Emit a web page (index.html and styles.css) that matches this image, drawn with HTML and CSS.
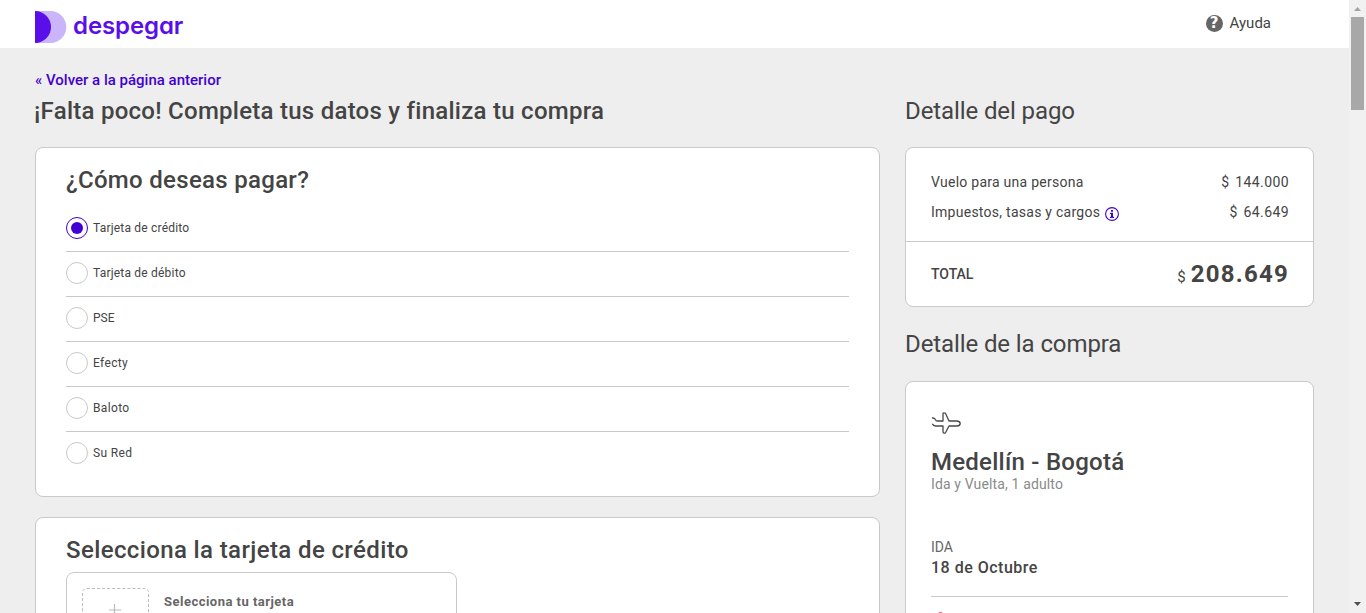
FILE: index.html
```html
<!DOCTYPE html>
<html lang="es">
<head>
<meta charset="utf-8">
<title>Despegar</title>
<link rel="stylesheet" href="styles.css">
</head>
<body>
<div class="page">
  <header class="header">
    <div class="logo">
      <svg class="logo-mark" width="32" height="32" viewBox="0 0 32 32"><path d="M0 0H15.500A15.800 16 0 0 1 15.500 32H0Z" fill="#cab5fa"/><path d="M0 0A16 16 0 0 1 0 32Z" fill="#5a0eea"/></svg>
      <span class="logo-name">despegar</span>
    </div>
    <div class="help"><span class="help-icon">?</span><span class="help-text">Ayuda</span></div>
  </header>
  <main class="content">
    <section class="main-column">
      <a class="back">« Volver a la página anterior</a>
      <h1 class="title">¡Falta poco! Completa tus datos y finaliza tu compra</h1>
      <div class="card payment">
        <h2 class="card-title pay-title">¿Cómo deseas pagar?</h2>
        <ul class="options">
          <li class="option"><span class="radio checked"></span><span>Tarjeta de crédito</span></li>
          <li class="option"><span class="radio"></span><span>Tarjeta de débito</span></li>
          <li class="option"><span class="radio"></span><span class="acronym">PSE</span></li>
          <li class="option"><span class="radio"></span><span class="brand">Efecty</span></li>
          <li class="option"><span class="radio"></span><span class="brand">Baloto</span></li>
          <li class="option"><span class="radio"></span><span class="brand">Su Red</span></li>
        </ul>
      </div>
      <div class="card select-card">
        <h2 class="card-title select-title">Selecciona la tarjeta de crédito</h2>
        <div class="picker">
          <div class="slot"><svg width="12" height="12" viewBox="0 0 12 12"><path d="M5.500 0V12M0 6H12" stroke="#bbb" stroke-width="1.200"/></svg></div>
          <span class="picker-label">Selecciona tu tarjeta</span>
        </div>
      </div>
    </section>
    <aside class="side-column">
      <h2 class="side-title">Detalle del pago</h2>
      <div class="card totals">
        <div class="lines">
          <div class="line"><span>Vuelo para una persona</span><span class="price">$ 144.000</span></div>
          <div class="line"><span class="concept"><span>Impuestos, tasas y cargos</span>
            <svg class="info" width="14" height="14" viewBox="0 0 14 14"><circle cx="7" cy="7" r="6.400" fill="none" stroke="#4300d2" stroke-width="1.100"/><path d="M6 3h2v1.700H6zM5 5.700h3v4.100h1V11H5V9.800h1V6.900H5z" fill="#4300d2"/></svg></span><span class="price">$ 64.649</span></div>
        </div>
        <div class="total"><span class="total-label">TOTAL</span><span class="total-price"><span class="currency">$</span><span class="amount">208.649</span></span></div>
      </div>
      <h2 class="side-title buy-detail">Detalle de la compra</h2>
      <div class="card trip">
        <svg class="plane" width="30" height="22" viewBox="0 0 30 22" fill="none" stroke="#484848" stroke-width="1.300" stroke-linejoin="round" stroke-linecap="round"><path d="M1.500 6Q3.500 5.800 4.500 7.700Q5 9 6.500 9H12V2Q12 .7 13.300.8Q14.300.8 14.700 1.800L18 9H26Q29.200 9.500 29.200 11.600Q29 14 26 14H18L14.700 20.300Q14.100 21.300 13.200 21.200Q12 21 12 19.800V14H4.500Q2.500 13.700 1.500 12.200"/></svg>
        <h3 class="route">Medellín - Bogotá</h3>
        <p class="trip-info">Ida y Vuelta, 1 adulto</p>
        <p class="leg">IDA</p>
        <p class="date">18 de Octubre</p>
        <div class="flight"><span class="airline"></span></div>
      </div>
    </aside>
  </main>
</div>
<div class="scrollbar">
  <svg width="17" height="17" viewBox="0 0 17 17"><path d="M5 11L8.500 7L12 11Z" fill="#a3a3a3"/></svg>
  <div class="thumb"></div>
  <svg class="down" width="17" height="17" viewBox="0 0 17 17"><path d="M5 6L8.500 10L12 6Z" fill="#505050"/></svg>
</div>
</body>
</html>
```

FILE: styles.css
```css
* { box-sizing: border-box; margin: 0; padding: 0; }
body { display: flex; height: 613px; overflow: hidden; background: #eee; color: #444; font-family: Roboto, "Liberation Sans", sans-serif; white-space: nowrap; }
.page { width: 1349px; height: 613px; overflow: hidden; }
.header { height: 48px; background: #fff; display: flex; justify-content: space-between; padding: 0 78px 0 35px; }
.logo { display: flex; padding-top: 11px; gap: 6px; }
.logo-name { font: 600 24px/30px Inter, sans-serif; font-feature-settings: "cv11"; letter-spacing: -0.1px; color: #5a0eea; }
.help { display: flex; align-items: center; gap: 7px; height: 46px; }
.help-icon { width: 17px; height: 17px; border-radius: 50%; background: #666; color: #fff; font: 700 15px/17px "DejaVu Sans", sans-serif; text-align: center; }
.help-text { font-size: 15px; }
.content { display: flex; gap: 25px; padding: 22px 35px 0; }
.main-column { width: 845px; }
.side-column { width: 409px; padding-top: 25px; }
.back { display: block; width: max-content; height: 20px; font-size: 15px; font-weight: 500; line-height: 20px; color: #4300d2; }
.title { width: max-content; font-size: 24px; font-weight: 500; line-height: 32px; letter-spacing: 0.26px; margin: 5px 0 20px -1px; }
.card { background: #fff; border: 1px solid #c9c9c9; border-radius: 8px; }
.payment { height: 350px; padding: 17px 30px 0; }
.card-title { width: max-content; font-size: 24px; font-weight: 500; line-height: 30px; }
.pay-title { letter-spacing: 0.3px; }
.select-title { letter-spacing: 0.38px; }
.options { list-style: none; padding-top: 12px; }
.option { display: flex; gap: 5px; height: 45px; padding-top: 10px; border-bottom: 1px solid #c9c9c9; font-size: 12px; line-height: 23px; letter-spacing: 0.2px; }
.option:last-child { border: 0; }
.acronym { letter-spacing: 0; }
.brand { letter-spacing: 0.35px; }
.radio { display: flex; align-items: center; justify-content: center; width: 22px; height: 22px; border: 1px solid #c9c9c9; border-radius: 50%; }
.checked { border-color: #4300d2; }
.checked::before { content: ""; width: 12px; height: 12px; border-radius: 50%; background: #4300d2; }
.select-card { height: 350px; margin-top: 20px; padding: 17px 30px; }
.picker { display: flex; gap: 15px; width: 391px; height: 100px; margin-top: 7px; padding: 15px; border: 1px solid #c9c9c9; border-radius: 8px; }
.slot { display: flex; justify-content: center; width: 67px; height: 44px; padding: 15px 1px 0 0; border: 1px dashed #bbb; border-radius: 5px; }
.picker-label { font-size: 13px; font-weight: 700; line-height: 16px; letter-spacing: 0.48px; padding-top: 6px; color: #666; }
.side-title { width: max-content; font-size: 24px; font-weight: 400; line-height: 32px; letter-spacing: -0.1px; margin: 0 0 20px; }
.totals { height: 160px; }
.lines { height: 94px; padding: 19px 24px 0 25px; border-bottom: 1px solid #c9c9c9; }
.line { display: flex; justify-content: space-between; height: 30px; line-height: 30px; font-size: 14px; letter-spacing: 0.26px; }
.price { word-spacing: 2px; letter-spacing: 0.4px; }
.concept { display: flex; gap: 5px; }
.info { margin-top: 10px; }
.total { display: flex; align-items: center; justify-content: space-between; height: 64px; padding: 0 24px 0 25px; }
.total-label { font-size: 14px; font-weight: 500; }
.total-price { display: flex; align-items: baseline; gap: 5px; }
.currency { font-size: 15px; }
.amount { font-size: 24px; font-weight: 700; letter-spacing: 1.25px; }
.buy-detail { margin: 21px 0 21px; }
.trip { height: 400px; padding: 30px 25px 0; }
.plane { display: block; }
.route { width: max-content; font-size: 24px; font-weight: 500; line-height: 32px; letter-spacing: 0.25px; margin-top: 12px; }
.trip-info { font-size: 14px; line-height: 16px; letter-spacing: 0.14px; margin-top: -2px; color: #8a8a8a; }
.leg { margin-top: 45px; font-size: 14px; line-height: 20px; color: #666; }
.date { font-size: 16px; font-weight: 500; line-height: 22px; letter-spacing: 0.5px; }
.flight { display: flex; margin-top: 17px; padding: 15px 0 0 7px; border-top: 1px solid #c9c9c9; }
.airline { width: 5px; height: 5px; border-radius: 50%; background: #ed5b7d; }
.scrollbar { display: flex; flex-direction: column; width: 17px; height: 613px; background: #f1f1f1; }
.scrollbar svg { display: block; }
.thumb { width: 13px; height: 93px; margin-left: 2px; background: #a8a8a8; }
.down { margin-top: auto; }
```
